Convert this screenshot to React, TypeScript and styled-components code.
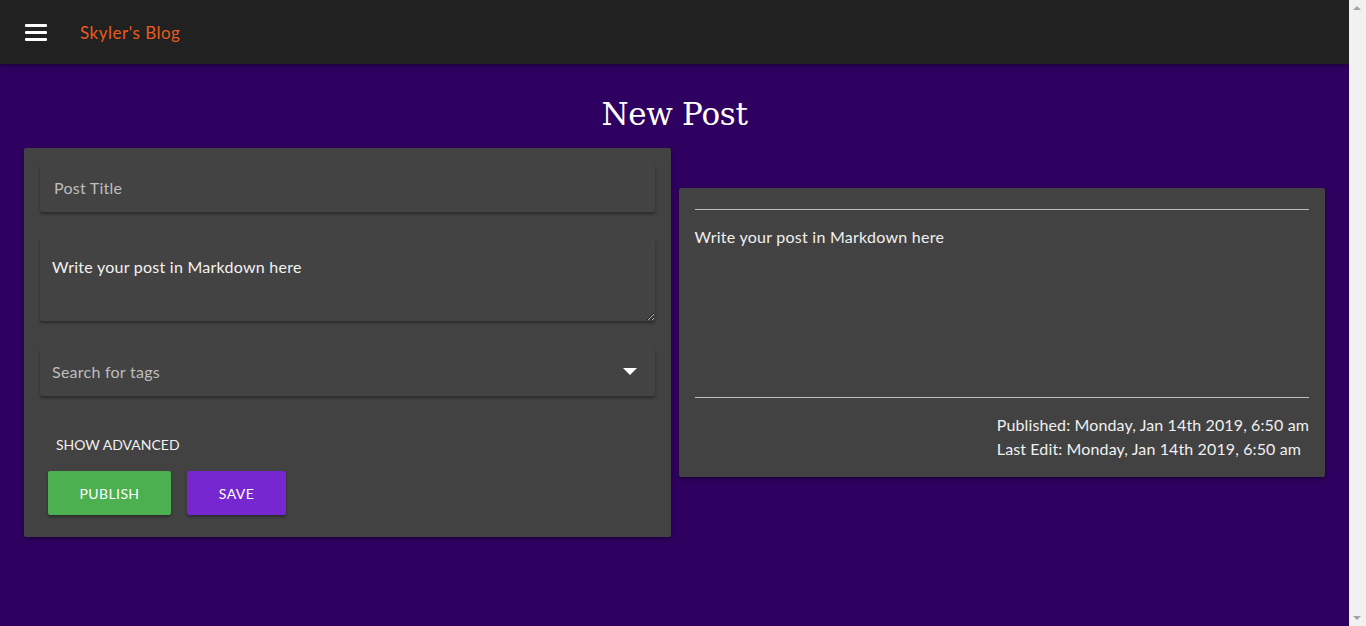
import React from "react";
import styled, { createGlobalStyle } from "styled-components";

const Global = createGlobalStyle`
  html { background: #f1f1f1; }
  body {
    margin: 0;
    background: #2e0060;
    border-right: 17px solid #f1f1f1;
    min-height: 626px;
    font-family: Lato, "Open Sans", sans-serif;
    color: #f0f0f0;
  }
  body::before, body::after {
    content: "";
    position: fixed;
    right: 5px;
    width: 0;
    height: 0;
    border-left: 4px solid transparent;
    border-right: 4px solid transparent;
    z-index: 5;
  }
  body::before { top: 6px; border-bottom: 4px solid #a3a3a3; }
  body::after { bottom: 6px; border-top: 4px solid #a3a3a3; }
  * { box-sizing: border-box; }
`;

const NavBar = styled.header`
  height: 64px;
  background: #212121;
  display: flex;
  align-items: center;
  padding-left: 25px;
  box-shadow: 0 2px 4px rgba(0, 0, 0, 0.4);
  position: relative;
  z-index: 2;
`;

const Burger = styled.div`
  width: 22px;
  display: flex;
  flex-direction: column;
  gap: 4px;
  margin-right: 33px;
  span {
    height: 3px;
    background: #fff;
    border-radius: 1px;
  }
`;

const Brand = styled.a`
  color: #e85c1d;
  font-size: 17px;
  text-decoration: none;
  letter-spacing: 0.5px;
`;

const Main = styled.main`
  padding: 0 24px 24px;
  letter-spacing: 0.25px;
`;

const Heading = styled.h1`
  margin: 0;
  padding: 32px 0 16px;
  text-align: center;
  font-family: "DejaVu Serif", serif;
  font-weight: normal;
  font-size: 31px;
  line-height: 36px;
  color: #fff;
  letter-spacing: -0.3px;
`;

const Columns = styled.div`
  display: grid;
  grid-template-columns: 1fr 1fr;
  gap: 8px;
  align-items: start;
`;

const Card = styled.section<{ $offset?: number }>`
  background: #424242;
  border-radius: 2px;
  box-shadow: 0 2px 4px rgba(0, 0, 0, 0.35);
  padding: 16px;
  margin-top: ${(p) => p.$offset ?? 0}px;
`;

const Field = styled.div<{ $h: number; $mb: number }>`
  height: ${(p) => p.$h}px;
  margin-bottom: ${(p) => p.$mb}px;
  background: #434343;
  border-radius: 2px;
  box-shadow: 0 2px 3px rgba(0, 0, 0, 0.35);
  position: relative;
  display: flex;
  align-items: center;
  padding: 0 12px 2px;
  font-size: 16px;
`;

const TextInput = styled.input`
  width: 100%;
  background: transparent;
  border: none;
  outline: none;
  font: inherit;
  letter-spacing: inherit;
  color: #fff;
  &::placeholder { color: #bdbdbd; }
`;

const Area = styled.textarea`
  width: 100%;
  height: 83px;
  background: #434343;
  border: none;
  outline: none;
  border-radius: 2px;
  box-shadow: 0 2px 3px rgba(0, 0, 0, 0.35);
  font: inherit;
  letter-spacing: inherit;
  font-size: 16px;
  color: #f2f2f2;
  padding: 19px 12px 0;
  margin-bottom: 27px;
  display: block;
`;

const Placeholder = styled.span`
  color: #bdbdbd;
  flex: 1;
`;

const Caret = styled.span`
  width: 0;
  height: 0;
  border-left: 7px solid transparent;
  border-right: 7px solid transparent;
  border-top: 7px solid #fff;
  margin-right: 6px;
`;

const Actions = styled.div`
  padding: 30px 8px 6px;
`;

const FlatButton = styled.button`
  background: none;
  border: none;
  color: #f0f0f0;
  font: inherit;
  font-size: 14px;
  text-transform: uppercase;
  height: 36px;
  padding: 0 8px;
  margin-bottom: 9px;
  display: block;
`;

const ButtonRow = styled.div`
  display: flex;
  gap: 16px;
`;

const RaisedButton = styled.button<{ $bg: string; $w: number }>`
  background: ${(p) => p.$bg};
  width: ${(p) => p.$w}px;
  height: 44px;
  border: none;
  border-radius: 2px;
  color: #fff;
  font: inherit;
  font-size: 14px;
  letter-spacing: 0.4px;
  text-transform: uppercase;
  box-shadow: 0 2px 3px rgba(0, 0, 0, 0.35);
`;

const Rule = styled.hr`
  border: none;
  border-top: 1px solid #bdbdbd;
  margin: 5px 0 0;
`;

const PreviewBody = styled.div`
  height: 182px;
  padding-top: 17px;
  font-size: 16px;
  line-height: 20px;
`;

const Meta = styled.div`
  display: flex;
  justify-content: flex-end;
  padding: 15px 0 0;
`;

const MetaLines = styled.div`
  font-size: 16px;
  line-height: 24px;
  letter-spacing: 0.12px;
`;

export default function App() {
  return (
    <>
      <Global />
      <NavBar>
        <Burger>
          <span />
          <span />
          <span />
        </Burger>
        <Brand href="#">Skyler's Blog</Brand>
      </NavBar>
      <Main>
        <Heading>New Post</Heading>
        <Columns>
          <Card>
            <Field $h={48} $mb={26}>
              <TextInput placeholder="Post Title" />
            </Field>
            <Area defaultValue="Write your post in Markdown here" />
            <Field $h={48} $mb={0}>
              <Placeholder>Search for tags</Placeholder>
              <Caret />
            </Field>
            <Actions>
              <FlatButton>Show Advanced</FlatButton>
              <ButtonRow>
                <RaisedButton $bg="#4caf50" $w={123}>Publish</RaisedButton>
                <RaisedButton $bg="#7627cf" $w={99}>Save</RaisedButton>
              </ButtonRow>
            </Actions>
          </Card>
          <Card $offset={40}>
            <Rule />
            <PreviewBody>Write your post in Markdown here</PreviewBody>
            <Rule />
            <Meta>
              <MetaLines>
                <div>Published: Monday, Jan 14th 2019, 6:50 am</div>
                <div>Last Edit: Monday, Jan 14th 2019, 6:50 am</div>
              </MetaLines>
            </Meta>
          </Card>
        </Columns>
      </Main>
    </>
  );
}
